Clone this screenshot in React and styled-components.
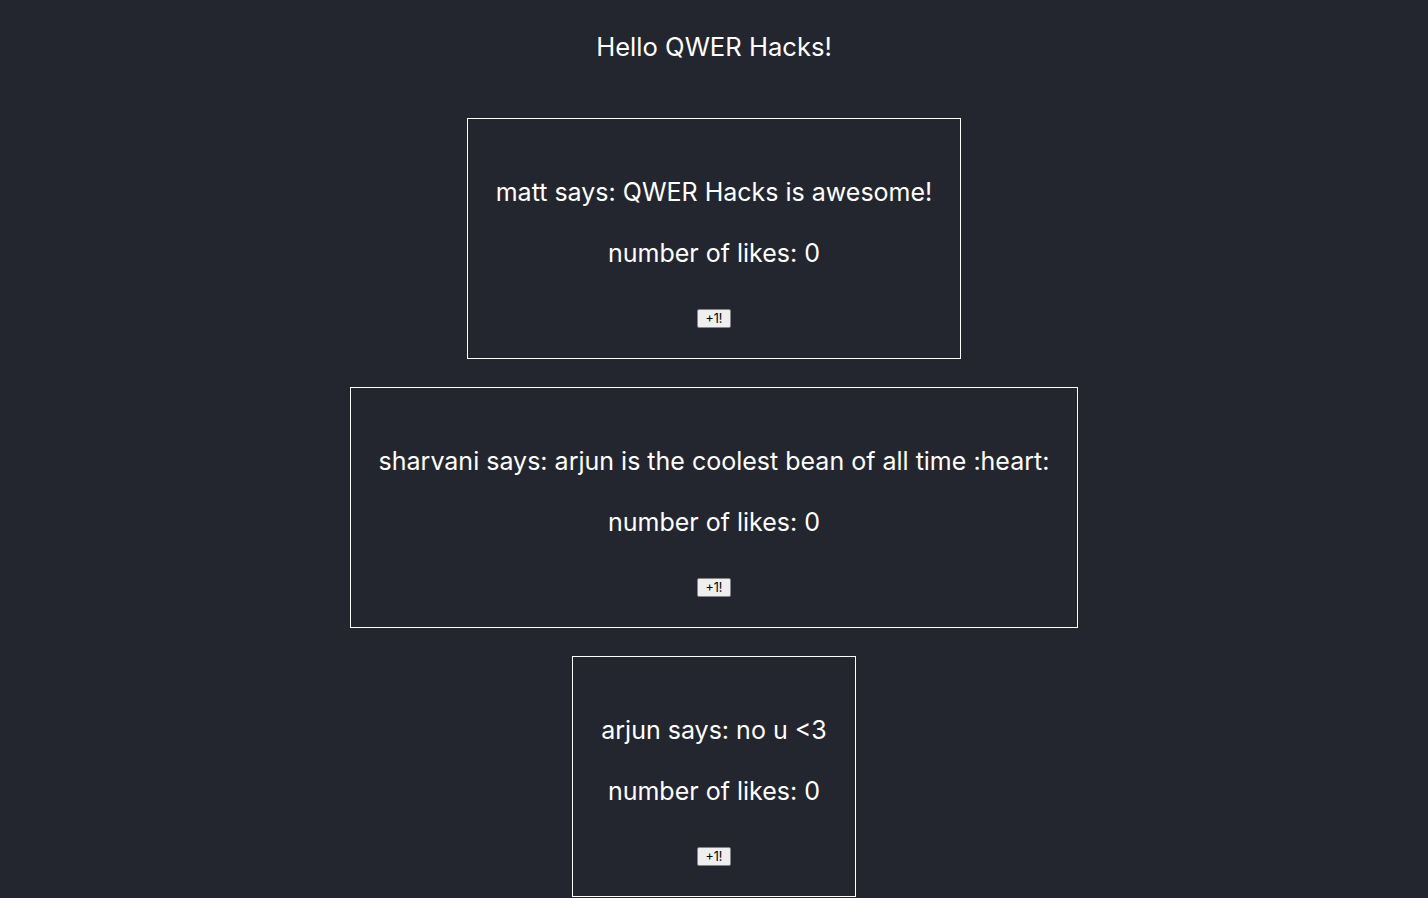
import React, {useState} from 'react';
import styled, {createGlobalStyle} from 'styled-components';

const GlobalStyle = createGlobalStyle`
  html, body {
    margin: 0;
    padding: 0;
    background: #23262e;
  }
  body {
    font-family: Inter, "Noto Sans", "Liberation Sans", sans-serif;
    color: #ffffff;
  }
`;

const Page = styled.div`
  min-height: 898px;
  display: flex;
  flex-direction: column;
  align-items: center;
  background: #23262e;
`;

const Title = styled.h1`
  margin: 32px 0 0;
  font-size: 25.6px;
  line-height: 30px;
  font-weight: 400;
`;

const Posts = styled.div`
  display: flex;
  flex-direction: column;
  align-items: center;
  gap: 28px;
  margin-top: 56px;
`;

const Card = styled.div`
  display: flex;
  flex-direction: column;
  align-items: center;
  border: 1px solid #ffffff;
  padding: 28px 28px 30px;
`;

const Line = styled.p`
  margin: 30px 0 0;
  font-size: 25px;
  line-height: 31px;
  white-space: nowrap;
  &:first-child {
    margin-top: 30px;
  }
`;

const LikeBtn = styled.button`
  margin-top: 40px;
  height: 19px;
  padding: 0 8px;
  font-family: Inter, "Liberation Sans", Arial, sans-serif;
  font-size: 12.5px;
  font-weight: 400;
  color: #000;
  background: #efefef;
  border: 1px solid #858585;
  border-radius: 2px;
  cursor: pointer;
`;

const posts = [
    {id: 1, user: 'matt', text: 'QWER Hacks is awesome!'},
    {id: 2, user: 'sharvani', text: 'arjun is the coolest bean of all time :heart:'},
    {id: 3, user: 'arjun', text: 'no u <3'},
];

const Post = ({post}) => {
    const [likes, setLikes] = useState(0);
    return (
        <Card>
            <Line>{post.user} says: {post.text}</Line>
            <Line>number of likes: {likes}</Line>
            <LikeBtn onClick={() => setLikes(likes + 1)}>+1!</LikeBtn>
        </Card>
    )
};

const App = () => (
    <Page>
        <GlobalStyle/>
        <Title>Hello QWER Hacks!</Title>
        <Posts>
            {posts.map(post => <Post key={post.id} post={post}/>)}
        </Posts>
    </Page>
);

export default App;
